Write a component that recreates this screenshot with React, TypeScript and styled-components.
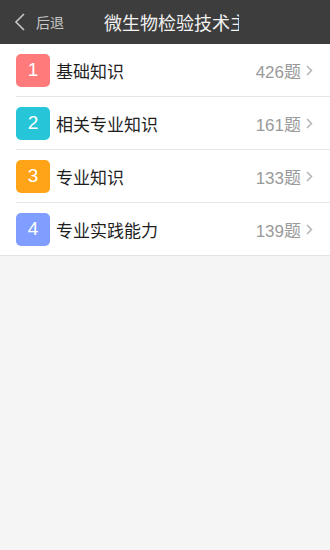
import React from 'react'
import styled, { createGlobalStyle } from 'styled-components'

const GlobalStyle = createGlobalStyle`
  html, body {
    margin: 0;
    padding: 0;
    background: #f5f5f5;
    font-family: "Liberation Sans", "Noto Sans CJK SC", sans-serif;
  }
`

const Page = styled.div`
  width: 330px;
  height: 550px;
  background: #f5f5f5;
`

const TopBar = styled.div`
  height: 44px;
  background: #3d3d3d;
  display: flex;
  align-items: center;
  padding-left: 14px;
`

const BackButton = styled.div`
  display: flex;
  align-items: center;
  color: #c8c8c8;
  font-size: 14px;
  width: 90px;

  svg {
    margin-right: 11px;
  }
`

// the long title is clipped by the bar, as in the app
const Title = styled.div`
  width: 135px;
  overflow: hidden;
  white-space: nowrap;
  color: #f2f2f2;
  font-size: 18px;
`

const List = styled.div`
  background: #fff;
  border-bottom: 1px solid #e3e3e3;
`

const Row = styled.div`
  height: 52px;
  margin-left: 16px;
  display: flex;
  align-items: center;

  &:not(:last-child) {
    border-bottom: 1px solid #e6e6e6;
  }
`

const Badge = styled.div<{ $color: string }>`
  width: 34px;
  height: 33px;
  border-radius: 5px;
  background: ${(p) => p.$color};
  color: #fff;
  font-size: 19px;
  display: flex;
  align-items: center;
  justify-content: center;
  margin-right: 6px;
`

const Name = styled.div`
  flex: 1;
  font-size: 17px;
  color: #1e1e1e;
`

const Count = styled.div`
  font-size: 17px;
  color: #9a9a9a;
  margin-right: 5px;
`

const Chevron = styled.svg`
  margin-right: 17px;
`

const items = [
  { no: 1, name: '基础知识', count: 426, color: '#ff7a7a' },
  { no: 2, name: '相关专业知识', count: 161, color: '#26c6d8' },
  { no: 3, name: '专业知识', count: 133, color: '#ffa416' },
  { no: 4, name: '专业实践能力', count: 139, color: '#7f9eff' },
]

export default function App() {
  return (
    <Page>
      <GlobalStyle />
      <TopBar>
        <BackButton>
          <svg width="11" height="18" viewBox="0 0 11 18">
            <path d="M10 1 L2 9 L10 17" fill="none" stroke="#c8c8c8" strokeWidth="1.6" />
          </svg>
          后退
        </BackButton>
        <Title>微生物检验技术主管技师</Title>
      </TopBar>
      <List>
        {items.map((it) => (
          <Row key={it.no}>
            <Badge $color={it.color}>{it.no}</Badge>
            <Name>{it.name}</Name>
            <Count>{it.count}题</Count>
            <Chevron width="7" height="11" viewBox="0 0 7 11">
              <path d="M1 1 L5.5 5.5 L1 10" fill="none" stroke="#b5b5b5" strokeWidth="1.5" />
            </Chevron>
          </Row>
        ))}
      </List>
    </Page>
  )
}
